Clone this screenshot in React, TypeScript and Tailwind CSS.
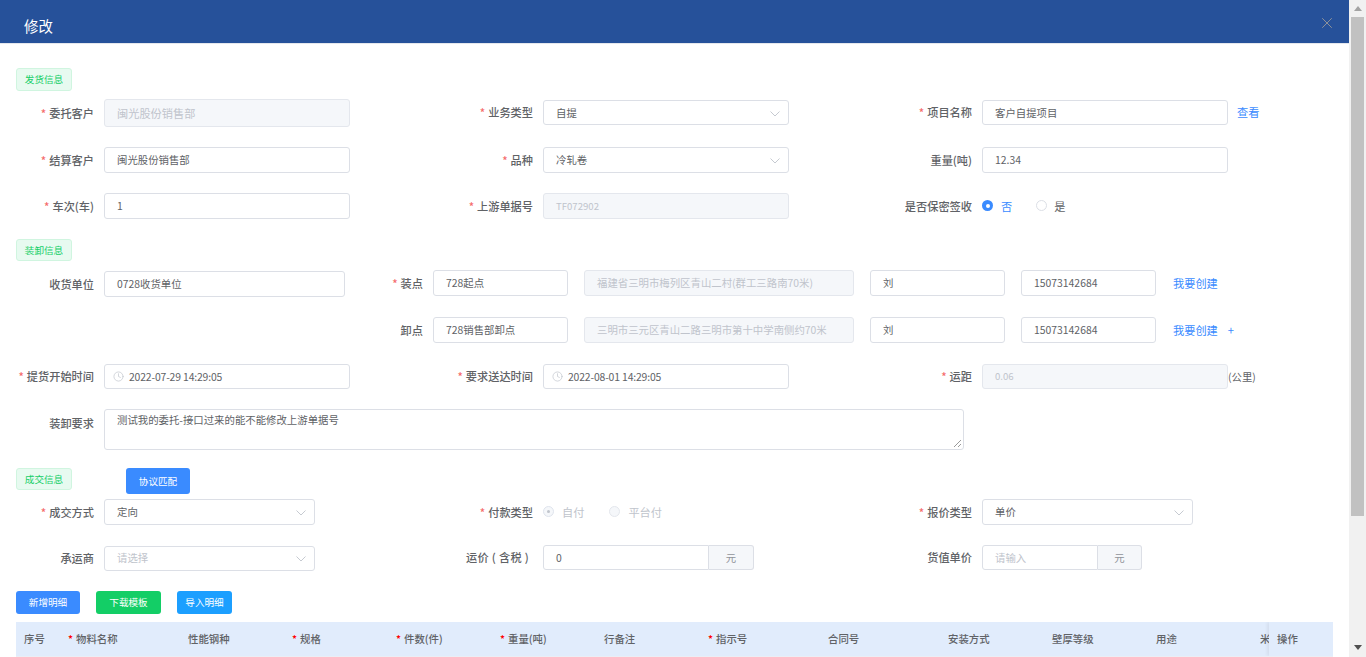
import type { ReactNode } from "react";
import { Clock, X } from "lucide-react";

const tableColumns = [
  { title: "序号", width: "w-[44px]" },
  { title: "物料名称", width: "w-[120px]", required: true },
  { title: "性能钢种", width: "w-[104px]" },
  { title: "规格", width: "w-[104px]", required: true },
  { title: "件数(件)", width: "w-[104px]", required: true },
  { title: "重量(吨)", width: "w-[104px]", required: true },
  { title: "行备注", width: "w-[104px]" },
  { title: "指示号", width: "w-[120px]", required: true },
  { title: "合同号", width: "w-[120px]" },
  { title: "安装方式", width: "w-[104px]" },
  { title: "壁厚等级", width: "w-[104px]" },
  { title: "用途", width: "w-[104px]" },
  { title: "米", width: "w-[17px]" },
];

function Tag({ children, className = "h-[22px]" }: { children: ReactNode; className?: string }) {
  return (
    <div className={`flex w-[56px] shrink-0 items-center justify-center rounded-[3px] border border-[#d0f5e0] bg-[#e7faf0] text-[9.6px] text-[#13ce66] ${className}`}>
      {children}
    </div>
  );
}

function Label({ children, required, className = "w-[78px] mr-[10px]" }: { children: ReactNode; required?: boolean; className?: string }) {
  return (
    <div className={`shrink-0 whitespace-nowrap text-right text-[11.2px] font-medium text-[#606266] ${className}`}>
      {required && <span className="mr-[3px] text-[#f56c6c]">*</span>}
      {children}
    </div>
  );
}

function Box({
  children,
  className = "w-[246px] h-[26px]",
  disabled,
  placeholder,
}: {
  children?: ReactNode;
  className?: string;
  disabled?: boolean;
  placeholder?: boolean;
}) {
  const tone = disabled
    ? "border-[#e4e7ed] bg-[#f5f7fa] text-[#c0c4cc] text-[11.2px]"
    : placeholder
      ? "border-[#dcdfe6] bg-white text-[#c0c4cc] text-[10.4px]"
      : "border-[#dcdfe6] bg-white text-[#606266] text-[10.4px]";
  return (
    <div className={`flex shrink-0 items-center whitespace-nowrap rounded-[3px] border pl-3 ${tone} ${className}`}>
      {children}
    </div>
  );
}

function Chevron() {
  return (
    <svg className="ml-auto mr-[8px] mt-[2px]" width="10" height="6" viewBox="0 0 10 6" fill="none">
      <path d="M0.5 0.5L5 5L9.5 0.5" stroke="#c0c4cc" strokeWidth="0.9" />
    </svg>
  );
}

function Select({ children, className, placeholder }: { children: ReactNode; className?: string; placeholder?: boolean }) {
  return (
    <Box className={className} placeholder={placeholder}>
      {children}
      <Chevron />
    </Box>
  );
}

function DateBox({ children }: { children: ReactNode }) {
  return (
    <Box className="h-[25px] w-[246px] gap-[5px] !pl-[8px] tracking-[-0.15px]">
      <Clock size={11} strokeWidth={1.5} color="#c0c4cc" />
      {children}
    </Box>
  );
}

function Radio({ checked, disabled }: { checked?: boolean; disabled?: boolean }) {
  if (checked && disabled) {
    return (
      <span className="flex h-[11px] w-[11px] items-center justify-center rounded-full border border-[#dfe4ed] bg-[#f5f7fa]">
        <span className="h-[3px] w-[3px] rounded-full bg-[#c0c4cc]" />
      </span>
    );
  }
  if (checked) {
    return (
      <span className="flex h-[11px] w-[11px] items-center justify-center rounded-full bg-[#3a8bff]">
        <span className="h-[4px] w-[4px] rounded-full bg-white" />
      </span>
    );
  }
  return <span className={`h-[11px] w-[11px] rounded-full border ${disabled ? "border-[#e4e7ed] bg-[#f5f7fa]" : "border-[#dcdfe6] bg-white"}`} />;
}

function Unit({ value, placeholder, inputWidth, unitWidth }: { value: string; placeholder?: boolean; inputWidth: string; unitWidth: string }) {
  return (
    <div className="flex h-[25px] shrink-0 text-[10.4px]">
      <div className={`flex items-center rounded-l-[3px] border border-[#dcdfe6] pl-3 ${inputWidth} ${placeholder ? "text-[#c0c4cc]" : "text-[#606266]"}`}>
        {value}
      </div>
      <div className={`flex items-center justify-center rounded-r-[3px] border border-l-0 border-[#dcdfe6] bg-[#f5f7fa] text-[#909399] ${unitWidth}`}>元</div>
    </div>
  );
}

function Btn({ children, className }: { children: ReactNode; className: string }) {
  return <div className={`flex items-center justify-center rounded-[3px] text-[9.6px] text-white ${className}`}>{children}</div>;
}

function PointRow({ label, required, point, address, last, first, plus, className }: {
  label: string;
  required?: boolean;
  point: string;
  address: string;
  last: ReactNode;
  first?: ReactNode;
  plus?: boolean;
  className: string;
}) {
  return (
    <div className={`flex items-start ${className}`}>
      <div className="w-[329px] shrink-0">{first}</div>
      <Label required={required} className="mr-[10px] mt-[5px] w-[78px]">{label}</Label>
      <Box className="h-[26px] w-[135px]">{point}</Box>
      <Box disabled className="ml-4 h-[26px] w-[270px] !text-[10.4px]">{address}</Box>
      <Box className="ml-4 h-[26px] w-[135px]">刘</Box>
      <Box className="ml-4 h-[26px] w-[135px]">{last}</Box>
      <div className="ml-[17px] mt-[5px] text-[11.2px] text-[#3a8bff]">我要创建</div>
      {plus && <div className="ml-[10px] mt-[5px] text-[11.2px] text-[#3a8bff]">+</div>}
    </div>
  );
}

export default function App() {
  return (
    <div
      className="flex h-[657px] w-full overflow-hidden bg-white"
      style={{ fontFamily: '"Noto Sans CJK SC", "Noto Sans", sans-serif' }}
    >
      <div className="w-[1349px] shrink-0">
        <header className="flex h-[44px] items-center justify-between border-b border-[#e4e7ed] bg-[#26519a] pl-6 pr-[13px]">
          <span className="pt-[8px] text-[14.4px] text-white">修改</span>
          <X size={18} strokeWidth={1.3} color="#909399" className="mt-[3px]" />
        </header>

        <div className="px-4 pt-6">
          <Tag className="h-[23px]">发货信息</Tag>

          <div className="mt-2 grid h-[28px] grid-cols-[439px_439px_1fr] items-center">
            <div className="flex items-center">
              <Label required>委托客户</Label>
              <Box disabled className="h-[28px] w-[246px]">闽光股份销售部</Box>
            </div>
            <div className="mt-[-1px] flex items-center">
              <Label required>业务类型</Label>
              <Select className="h-[25px] w-[246px]">自提</Select>
            </div>
            <div className="mt-[-1px] flex items-center">
              <Label required>项目名称</Label>
              <Box className="h-[25px] w-[246px]">客户自提项目</Box>
              <span className="ml-[9px] text-[11.2px] text-[#3a8bff]">查看</span>
            </div>
          </div>

          <div className="mt-5 grid h-[26px] grid-cols-[439px_439px_1fr] items-center">
            <div className="flex items-center">
              <Label required>结算客户</Label>
              <Box>闽光股份销售部</Box>
            </div>
            <div className="flex items-center">
              <Label required>品种</Label>
              <Select className="h-[26px] w-[246px]">冷轧卷</Select>
            </div>
            <div className="flex items-center">
              <Label>重量(吨)</Label>
              <Box>12.34</Box>
            </div>
          </div>

          <div className="mt-5 grid h-[26px] grid-cols-[439px_439px_1fr] items-center">
            <div className="flex items-center">
              <Label required>车次(车)</Label>
              <Box>1</Box>
            </div>
            <div className="flex items-center">
              <Label required>上游单据号</Label>
              <Box disabled className="h-[26px] w-[246px] !text-[9.6px]">TF072902</Box>
            </div>
            <div className="flex items-center">
              <Label>是否保密签收</Label>
              <div className="flex items-center text-[11.2px]">
                <Radio checked />
                <span className="ml-[8px] text-[#3a8bff]">否</span>
                <span className="ml-6 flex items-center">
                  <Radio />
                </span>
                <span className="ml-[7px] text-[#606266]">是</span>
              </div>
            </div>
          </div>

          <div className="mt-5">
            <Tag>装卸信息</Tag>
          </div>

          <PointRow
            className="mt-[9px] h-[27px]"
            required
            label="装点"
            point="728起点"
            address="福建省三明市梅列区青山二村(群工三路南70米)"
            last="15073142684"
            first={
              <div className="mt-px flex items-center">
                <Label>收货单位</Label>
                <Box className="h-[26px] w-[241px]">0728收货单位</Box>
              </div>
            }
          />

          <PointRow
            className="mt-5 h-[26px]"
            label="卸点"
            point="728销售部卸点"
            address="三明市三元区青山二路三明市第十中学南侧约70米"
            last="15073142684"
            plus
          />

          <div className="mt-[21px] grid h-[25px] grid-cols-[439px_439px_1fr] items-center">
            <div className="flex items-center">
              <Label required>提货开始时间</Label>
              <DateBox>2022-07-29 14:29:05</DateBox>
            </div>
            <div className="flex items-center">
              <Label required>要求送达时间</Label>
              <DateBox>2022-08-01 14:29:05</DateBox>
            </div>
            <div className="flex items-center">
              <Label required>运距</Label>
              <Box disabled className="h-[25px] w-[246px] !text-[9.6px]">0.06</Box>
              <span className="text-[10.4px] text-[#606266]">(公里)</span>
            </div>
          </div>

          <div className="mt-5 flex items-start">
            <Label className="mr-[10px] mt-[6px] w-[78px]">装卸要求</Label>
            <div className="relative h-[41px] w-[860px] rounded-[3px] border border-[#dcdfe6] px-3 pt-[2px] text-[10.4px] text-[#606266]">
              测试我的委托-接口过来的能不能修改上游单据号
              <svg className="absolute bottom-px right-px" width="9" height="9" viewBox="0 0 9 9" fill="none">
                <path d="M1 8L8 1M5 8L8 5" stroke="#808080" strokeWidth="0.8" />
              </svg>
            </div>
          </div>

          <div className="mt-[18px] flex h-[26px] items-start">
            <Tag>成交信息</Tag>
            <Btn className="ml-[54px] h-[26px] w-[64px] bg-[#3a8bff]">协议匹配</Btn>
          </div>

          <div className="mt-[5px] grid h-[26px] grid-cols-[439px_439px_1fr] items-center">
            <div className="flex items-center">
              <Label required>成交方式</Label>
              <Select className="h-[26px] w-[211px]">定向</Select>
            </div>
            <div className="flex items-center">
              <Label required>付款类型</Label>
              <div className="flex items-center text-[11.2px] text-[#c0c4cc]">
                <Radio checked disabled />
                <span className="ml-[8px]">自付</span>
                <span className="ml-[25px] flex items-center">
                  <Radio disabled />
                </span>
                <span className="ml-[8px]">平台付</span>
              </div>
            </div>
            <div className="flex items-center">
              <Label required>报价类型</Label>
              <Select className="h-[26px] w-[211px]">单价</Select>
            </div>
          </div>

          <div className="mt-5 grid h-[26px] grid-cols-[439px_439px_1fr] items-center">
            <div className="flex items-center">
              <Label>承运商</Label>
              <Select className="h-[25px] w-[211px]" placeholder>请选择</Select>
            </div>
            <div className="flex items-center self-start">
              <Label className="mr-[14px] w-[74px] tracking-[0.3px]">运价 ( 含税 )</Label>
              <Unit value="0" inputWidth="w-[166px]" unitWidth="w-[45px]" />
            </div>
            <div className="flex items-center self-start">
              <Label>货值单价</Label>
              <Unit value="请输入" placeholder inputWidth="w-[116px]" unitWidth="w-[44px]" />
            </div>
          </div>

          <div className="mt-5 flex h-[23px] gap-4">
            <Btn className="w-[64px] bg-[#3a8bff]">新增明细</Btn>
            <Btn className="w-[65px] bg-[#13ce66]">下载模板</Btn>
            <Btn className="w-[55px] bg-[#1c9fff]">导入明细</Btn>
          </div>

          <div className="relative mt-2 flex h-[35px] w-[1317px] overflow-hidden border-b border-[#ebeef5] bg-[#e1ecfc]">
            {tableColumns.map((col) => (
              <div key={col.title} className={`flex shrink-0 items-center whitespace-nowrap pl-2 text-[10.4px] font-medium text-[#606266] ${col.width}`}>
                {col.required && <span className="mr-[3px] text-[#ff0000]">*</span>}
                {col.title}
              </div>
            ))}
            <div className="absolute inset-y-0 right-0 flex w-[64px] items-center bg-[#e1ecfc] pl-2 text-[10.4px] font-medium text-[#606266] shadow-[-2px_0_3px_rgba(0,0,0,0.06)]">
              操作
            </div>
          </div>
        </div>
      </div>

      {/* scrollbar */}
      <div className="flex w-[17px] shrink-0 flex-col items-center bg-[#f1f1f1]">
        <div className="mt-[6px] h-0 w-0 border-x-[4px] border-b-[5px] border-x-transparent border-b-[#a3a3a3]" />
        <div className="mt-[6px] h-[499px] w-[13px] bg-[#c1c1c1]" />
        <div className="mt-[129px] h-0 w-0 border-x-[4px] border-t-[5px] border-x-transparent border-t-[#505050]" />
      </div>
    </div>
  );
}
